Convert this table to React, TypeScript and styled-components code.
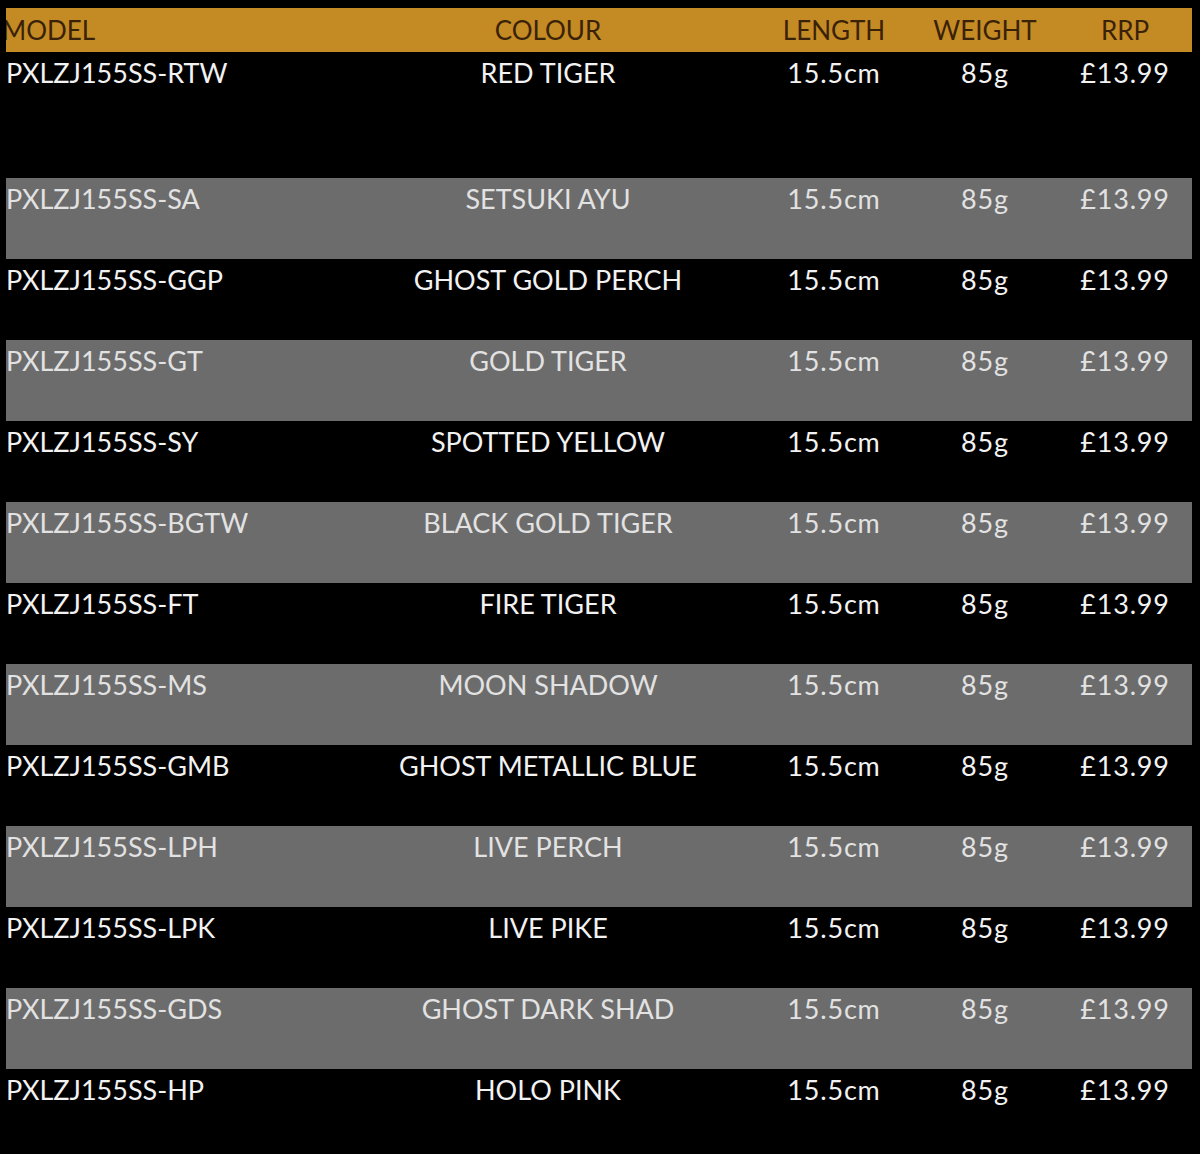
import React from "react";
import styled, { createGlobalStyle } from "styled-components";

const Global = createGlobalStyle`
  html, body { margin: 0; padding: 0; background: #000; }
  body { font-family: Lato, "Open Sans", sans-serif; }
`;

const Page = styled.div`
  padding: 8px 8px 0 6px;
  width: 1200px;
  height: 1154px;
  box-sizing: border-box;
  overflow: hidden;
  background: #000;
`;

const cols = "334px 416px 156px 146px 134px";

const Header = styled.div`
  display: grid;
  grid-template-columns: ${cols};
  height: 44px;
  background: #c48a24;
  color: #3a2208;
  font-size: 26px;
  line-height: 44px;
  overflow: hidden;
`;

const HeadCell = styled.div<{ $align?: "left" | "center"; $shift?: number }>`
  text-align: ${(p) => p.$align ?? "center"};
  white-space: nowrap;
  overflow: hidden;
  ${(p) => (p.$shift ? `text-indent: ${p.$shift}px;` : "")}
`;

const Row = styled.div<{ $grey: boolean; $height: number }>`
  display: grid;
  grid-template-columns: ${cols};
  height: ${(p) => p.$height}px;
  background: ${(p) => (p.$grey ? "#6c6c6c" : "#000")};
  color: ${(p) => (p.$grey ? "#e2e2e2" : "#f2f2f2")};
  font-size: 27px;
  line-height: 30px;
  padding-top: 6px;
  box-sizing: border-box;
`;

const Cell = styled.div<{ $align?: "left" | "center"; $spaced?: boolean }>`
  text-align: ${(p) => p.$align ?? "center"};
  white-space: nowrap;
  letter-spacing: ${(p) => (p.$spaced ? "0.8px" : "0")};
`;

const items: [string, string][] = [
  ["RTW", "RED TIGER"],
  ["SA", "SETSUKI AYU"],
  ["GGP", "GHOST GOLD PERCH"],
  ["GT", "GOLD TIGER"],
  ["SY", "SPOTTED YELLOW"],
  ["BGTW", "BLACK GOLD TIGER"],
  ["FT", "FIRE TIGER"],
  ["MS", "MOON SHADOW"],
  ["GMB", "GHOST METALLIC BLUE"],
  ["LPH", "LIVE PERCH"],
  ["LPK", "LIVE PIKE"],
  ["GDS", "GHOST DARK SHAD"],
  ["HP", "HOLO PINK"],
];

export default function App() {
  return (
    <>
      <Global />
      <Page>
        <Header>
          <HeadCell $align="left" $shift={-4}>MODEL</HeadCell>
          <HeadCell>COLOUR</HeadCell>
          <HeadCell>LENGTH</HeadCell>
          <HeadCell>WEIGHT</HeadCell>
          <HeadCell>RRP</HeadCell>
        </Header>
        {items.map(([code, colour], i) => (
          <Row key={code} $grey={i % 2 === 1} $height={i === 0 ? 126 : 81}>
            <Cell $align="left">PXLZJ155SS-{code}</Cell>
            <Cell>{colour}</Cell>
            <Cell $spaced>15.5cm</Cell>
            <Cell $spaced>85g</Cell>
            <Cell $spaced>£13.99</Cell>
          </Row>
        ))}
      </Page>
    </>
  );
}
